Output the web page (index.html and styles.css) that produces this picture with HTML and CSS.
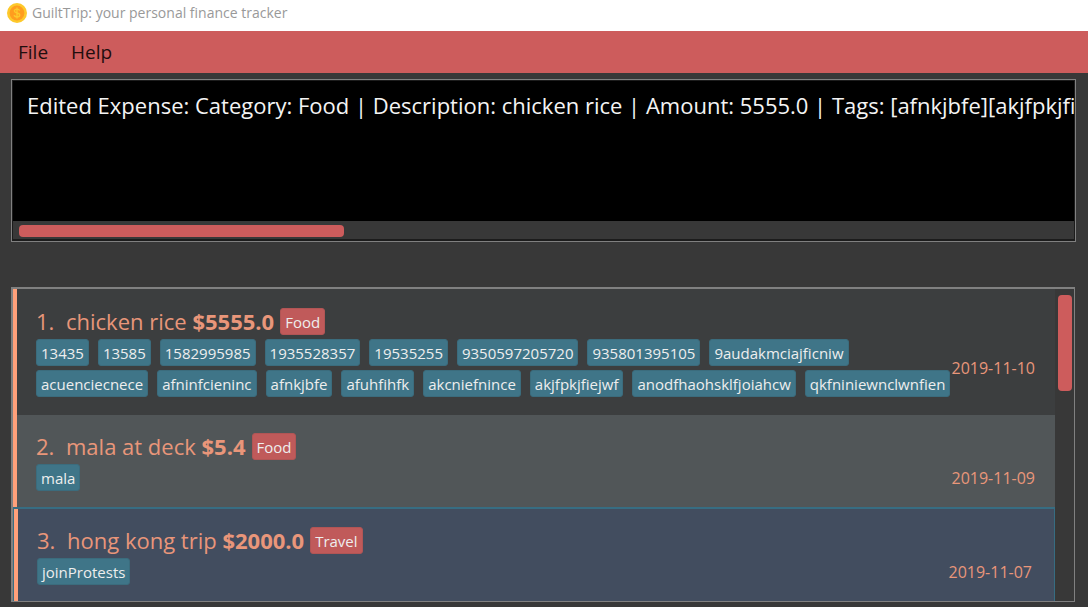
FILE: index.html
```html
<!DOCTYPE html>
<html lang="en">
<head>
<meta charset="utf-8">
<title>GuiltTrip: your personal finance tracker</title>
<link rel="stylesheet" href="styles.css">
</head>
<body>
<header class="title-bar">
  <svg class="coin" viewBox="0 0 20 20" aria-hidden="true">
    <circle cx="10" cy="10" r="10" fill="#fdc92b"/>
    <circle cx="10" cy="10" r="7.4" fill="#ff9d1e"/>
    <path d="M10 4.600v10.800M12.600 7.600c-.3-1-1.300-1.500-2.600-1.500-1.500 0-2.600.7-2.600 1.900 0 2.700 5.300 1.200 5.300 4 0 1.200-1.100 1.900-2.700 1.900-1.500 0-2.600-.6-2.800-1.700" fill="none" stroke="#fdc92b" stroke-width="1.4"/>
  </svg>
  <span>GuiltTrip: your personal finance tracker</span>
</header>
<nav class="menu-bar">
  <button class="menu" type="button">File</button>
  <button class="menu" type="button">Help</button>
</nav>
<main class="content">
  <section class="result">
    <textarea class="result-text" readonly wrap="off" aria-label="Result">Edited Expense: Category: Food | Description: chicken rice | Amount: 5555.0 | Tags: [afnkjbfe][akjfpkjfiejwf]</textarea>
    <div class="track-x"><div class="thumb-x"></div></div>
  </section>
  <section class="list">
    <ol class="cells">
      <li class="cell">
        <h2 class="heading"><span class="index">1.</span><span>chicken rice <b>$5555.0</b></span><span class="tag category">Food</span></h2>
        <div class="details">
          <div class="tags"><span class="tag">13435</span><span class="tag">13585</span><span class="tag">1582995985</span><span class="tag">1935528357</span><span class="tag">19535255</span><span class="tag">9350597205720</span><span class="tag">935801395105</span><span class="tag">9audakmciajficniw</span><span class="tag">acuenciecnece</span><span class="tag">afninfcieninc</span><span class="tag">afnkjbfe</span><span class="tag">afuhfihfk</span><span class="tag">akcniefnince</span><span class="tag">akjfpkjfiejwf</span><span class="tag">anodfhaohsklfjoiahcw</span><span class="tag">qkfniniewnclwnfien</span></div>
          <time class="date">2019-11-10</time>
        </div>
      </li>
      <li class="cell even">
        <h2 class="heading"><span class="index">2.</span><span>mala at deck <b>$5.4</b></span><span class="tag category">Food</span></h2>
        <div class="details">
          <div class="tags"><span class="tag">mala</span></div>
          <time class="date">2019-11-09</time>
        </div>
      </li>
      <li class="cell selected">
        <h2 class="heading"><span class="index">3.</span><span>hong kong trip <b>$2000.0</b></span><span class="tag category">Travel</span></h2>
        <div class="details">
          <div class="tags"><span class="tag">joinProtests</span></div>
          <time class="date">2019-11-07</time>
        </div>
      </li>
    </ol>
    <div class="track-y"><div class="thumb-y"></div></div>
  </section>
</main>
</body>
</html>
```
FILE: styles.css
```css
* { box-sizing: border-box; }
body {
  margin: 0;
  min-height: 100vh;
  background: #383838;
  font-family: "Open Sans", "Noto Sans", sans-serif;
  font-size: 15px;
}
.title-bar {
  display: flex;
  align-items: center;
  gap: 5px;
  height: 31px;
  padding: 0 7px 6px;
  background: #fff;
  color: #999;
  font-size: 14px;
}
.coin { width: 20px; height: 20px; }
.menu-bar {
  display: flex;
  gap: 23px;
  height: 42px;
  padding: 0 18px;
  background: #cd5c5c;
}
.menu {
  padding: 0;
  border: 0;
  background: none;
  color: #1f0e0e;
  font: inherit;
  font-size: 19px;
}
.content { padding: 6px 12px 5px 11px; }
.result {
  padding: 1px 1px 2px 1px;
  border: 1px solid #808080;
  background: #1c1c1c;
}
.result-text {
  display: block;
  width: 100%;
  height: 140px;
  padding: 8px 0 0 14px;
  border: 0;
  outline: 0;
  resize: none;
  overflow: hidden;
  background: #000;
  color: #f4f4f4;
  font: inherit;
  font-size: 22px;
  line-height: 32px;
}
.track-x {
  padding: 4px 6px 2px;
  height: 18px;
  background: #383838;
}
.thumb-x {
  width: 31%;
  height: 12px;
  border-radius: 4px;
  background: #cd5c5c;
}
.list {
  display: flex;
  margin: 45px 1px 0 0;
  border: solid #808080;
  border-width: 2px 1px 1px 2px;
}
.cells {
  flex: 1;
  min-width: 0;
  margin: 0;
  padding: 0;
  list-style: none;
}
.cell {
  padding: 18px 20px 16px 19px;
  border-left: 4px solid #ffa07a;
  background: #3c3e3f;
  color: #e9967a;
}
.cell:first-child { padding-top: 19px; padding-bottom: 18px; }
.even { background: #515658; }
.cell.selected {
  padding: 18px 22px 16px 23px;
  border: 1px solid #376d82;
  border-top-width: 2px;
  border-bottom: 0;
  background: linear-gradient(90deg, #ffa07a 4px, #424d5f 4px) padding-box;
}
.heading {
  display: flex;
  align-items: center;
  margin: 0 0 4px;
  height: 27px;
  font-size: 22px;
  font-weight: 400;
  line-height: 27px;
  white-space: nowrap;
}
.index { width: 30px; }
.category { margin-left: 6px; }
.details {
  display: flex;
  align-items: center;
  justify-content: space-between;
}
.tags {
  display: flex;
  flex-wrap: wrap;
  gap: 4px 9px;
}
.tag {
  padding: 1px 4px 0;
  border: 1px solid #3b6c7d;
  border-radius: 3px;
  background: #3f7588;
  color: #eee;
  font-size: 15px;
  line-height: 24px;
}
.tag.category {
  border-color: #b15555;
  background: #c05a5a;
}
.date { flex: none; font-size: 16px; }
.track-y {
  width: 19px;
  padding: 6px 2px 0 3px;
  background: #383838;
}
.thumb-y {
  height: 96px;
  border-radius: 4px;
  background: #cd5c5c;
}
```
